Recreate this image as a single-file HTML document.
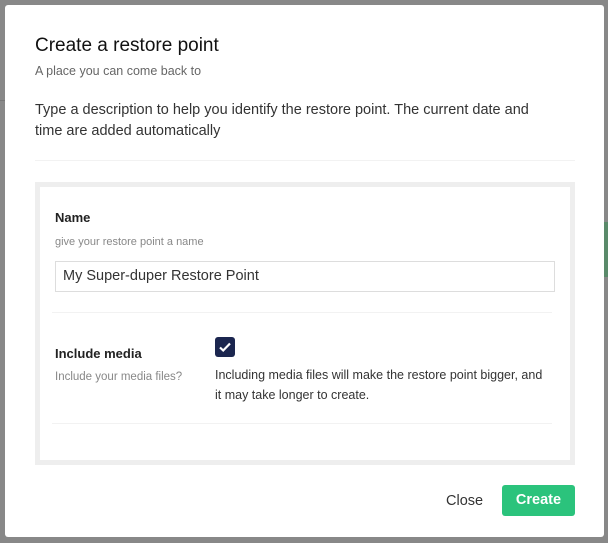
<!DOCTYPE html>
<html><head><style>
*{box-sizing:border-box;margin:0;padding:0}
body{width:608px;height:543px;background:#888;font-family:"Liberation Sans",sans-serif;position:relative;overflow:hidden}
.dlg{position:absolute;left:5px;top:5px;width:599px;height:532px;background:#fff;border-radius:3px}
.abs{position:absolute}
</style></head><body>
<div class="abs" style="left:0;top:100px;width:5px;height:1px;background:#777"></div>
<div class="abs" style="left:604px;top:222px;width:4px;height:55px;background:#5a8a6a"></div>
<div class="dlg">
<div class="abs" style="left:30px;top:30px;font-size:19px;color:#111">Create a restore point</div>
<div class="abs" style="left:30px;top:59px;font-size:12.5px;color:#666">A place you can come back to</div>
<div class="abs" style="left:30px;top:95px;font-size:14.5px;color:#333;line-height:21px;width:520px">Type a description to help you identify the restore point. The current date and time are added automatically</div>
<div class="abs" style="left:30px;top:155px;width:540px;height:1px;background:#f2f2f2"></div>
<div class="abs" style="left:30px;top:177px;width:540px;height:283px;border:5px solid #eee;background:#fff"></div>
<div class="abs" style="left:50px;top:205px;font-size:13px;font-weight:bold;color:#222">Name</div>
<div class="abs" style="left:50px;top:231px;font-size:11px;color:#888">give your restore point a name</div>
<div class="abs" style="left:50px;top:256px;width:500px;height:31px;border:1px solid #ddd;font-size:14.5px;color:#333;padding:6px 7px">My Super-duper Restore Point</div>
<div class="abs" style="left:47px;top:307px;width:500px;height:1px;background:#f2f2f2"></div>
<div class="abs" style="left:50px;top:341px;font-size:13px;font-weight:bold;color:#222">Include media</div>
<div class="abs" style="left:50px;top:366px;font-size:11.5px;color:#888">Include your media files?</div>
<div class="abs" style="left:210px;top:332px;width:20px;height:20px;background:#1b264f;border-radius:3px">
<svg width="20" height="20" viewBox="0 0 20 20"><path d="M5 10.5l3.2 3L15 6.5" stroke="#fff" stroke-width="2.2" fill="none"/></svg></div>
<div class="abs" style="left:210px;top:360px;font-size:12.5px;color:#333;line-height:20px;width:330px">Including media files will make the restore point bigger, and it may take longer to create.</div>
<div class="abs" style="left:47px;top:418px;width:500px;height:1px;background:#f2f2f2"></div>
<div class="abs" style="left:441px;top:488px;font-size:14.5px;color:#333">Close</div>
<div class="abs" style="left:497px;top:480px;width:73px;height:31px;background:#2bc37c;border-radius:3px;color:#fff;font-weight:bold;font-size:14.5px;text-align:center;line-height:31px">Create</div>
</div>
</body></html>
